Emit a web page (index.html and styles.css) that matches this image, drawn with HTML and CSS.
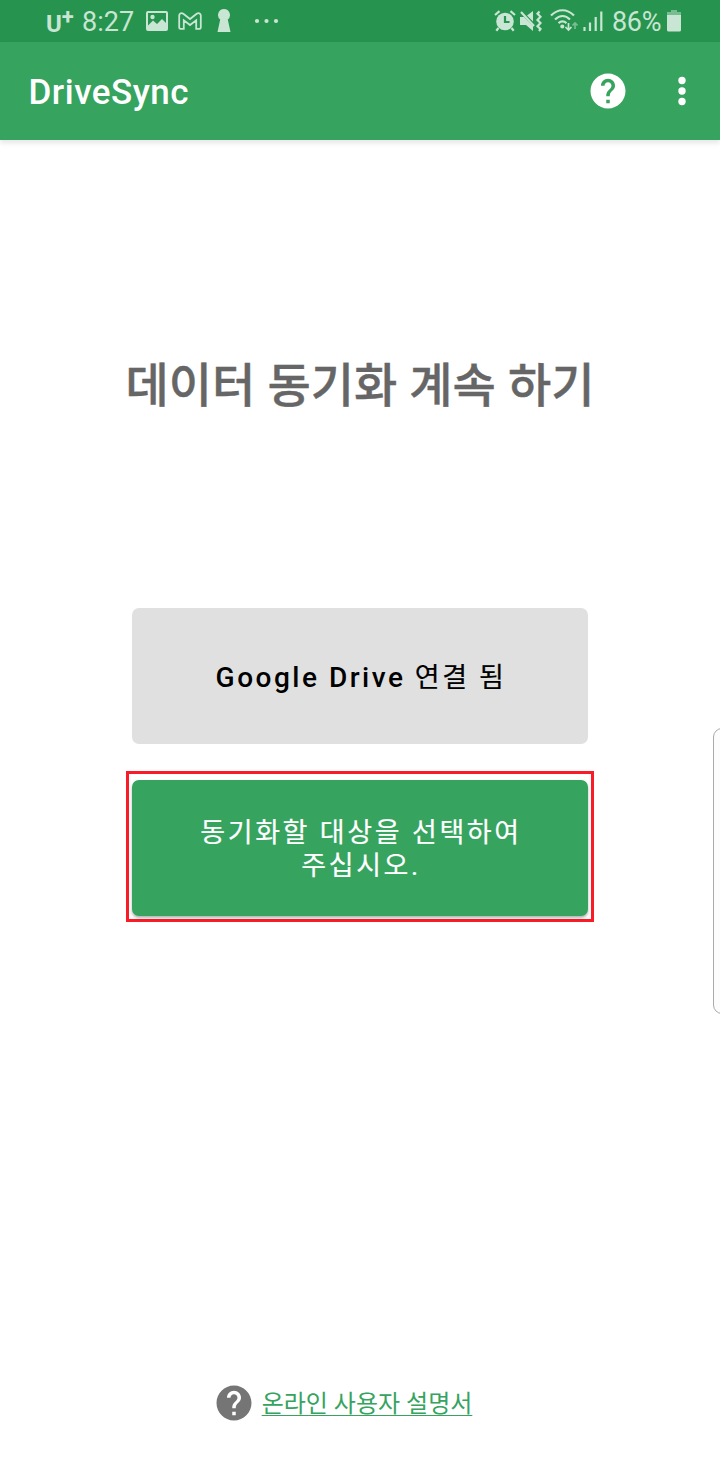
FILE: index.html
```
<!DOCTYPE html>
<html lang="ko">
  <head>
    <meta charset="UTF-8" />
    <meta name="viewport" content="width=device-width, initial-scale=1.0" />
    <title>DriveSync</title>
    <link rel="stylesheet" href="styles.css">
  </head>
  <body>
    <div class="status-bar">
      <div class="status-left">
        <span class="carrier">U<sup>+</sup></span>
        <span class="clock">8:27</span>
        <svg class="icon-picture" width="22" height="20" viewBox="0 0 22 20">
          <path fill-rule="evenodd" d="M2 0h18a2 2 0 0 1 2 2v16a2 2 0 0 1-2 2H2a2 2 0 0 1-2-2V2a2 2 0 0 1 2-2zM2 2v12.500l5-5 4 3.500 5-5 4 4V2z" />
          <circle cx="6.500" cy="6" r="2.200" />
        </svg>
        <svg class="icon-mail" width="24" height="18" viewBox="0 0 24 18">
          <path d="M1.200 15.500V3.500C1.200 1.200 3.600.5 5.300 1.800L12 7l6.700-5.200c1.700-1.300 4.100-.6 4.100 1.700v12c0 .8-.5 1.300-1.300 1.300h-3.300V8.300L12 13 5.800 8.300v8.500H2.500c-.8 0-1.300-.5-1.300-1.300z" />
        </svg>
        <svg class="icon-key" width="14" height="24" viewBox="0 0 14 24">
          <path d="M7 0a6 6 0 0 1 3.800 10.600L13.500 23H.5L3.200 10.600A6 6 0 0 1 7 0z" />
        </svg>
        <svg class="icon-more" width="26" height="6" viewBox="0 0 26 6">
          <circle cx="3" cy="3" r="2.100" /><circle cx="12.500" cy="3" r="2.100" /><circle cx="22" cy="3" r="2.100" />
        </svg>
      </div>
      <div class="status-right">
        <svg class="icon-alarm" width="22" height="22" viewBox="0 0 22 22">
          <circle cx="11" cy="11.500" r="8.800" />
          <path class="line" d="M1 5l4.500-3.800M21 5l-4.500-3.800M4.500 18L2.300 20.800M17.500 18l2.200 2.800" />
          <path class="cut" d="M11 6v6h4.500" />
        </svg>
        <svg class="icon-mute" width="22" height="22" viewBox="0 0 22 22">
          <path d="M0 7h4l9 9v5l-7-6H0zM7 5.500L13 1v10.500z" />
          <path class="line" d="M1 2l13 14M19.500 1.500l-2 2.300 3 3-3 3.200 3 3-3 3.200 3 2.800-1.500 2" />
        </svg>
        <svg class="icon-wifi" width="28" height="24" viewBox="0 0 28 24">
          <path class="line" d="M1 6.500C8-.5 17-.5 24 6.500M5 10.500c4.800-4.700 10.400-4.700 15 0M8.500 14.200c2.500-2.200 5.500-2.200 8 0" />
          <circle cx="12.300" cy="17.500" r="2" />
          <path class="arrow" d="M18.500 14v7M15.500 18l3 3 3-3" />
          <path class="arrow faded" d="M25 20v-6M22.500 16.500L25 14l2.500 2.500" />
        </svg>
        <svg class="icon-signal" width="20" height="21" viewBox="0 0 20 21">
          <path class="line" d="M1.500 16v4M7 11.500V20M12.700 6v14M18.300 0.500V20" />
        </svg>
        <span class="percent">86%</span>
        <svg class="icon-battery" width="14" height="22" viewBox="0 0 14 22">
          <path class="faded" d="M4 0h6v2h4v3H0V2h4z" />
          <path d="M0 5h14v15a1.500 1.500 0 0 1-1.500 1.500h-11A1.500 1.500 0 0 1 0 20z" />
        </svg>
      </div>
    </div>

    <div class="app-bar">
      <h1>DriveSync</h1>
      <svg class="help" width="42" height="42" viewBox="0 0 24 24">
        <path d="M12 2C6.480 2 2 6.480 2 12s4.480 10 10 10 10-4.480 10-10S17.520 2 12 2zm1 17h-2v-2h2v2zm2.070-7.750l-.9.920C13.450 12.900 13 13.500 13 15h-2v-.5c0-1.100.45-2.100 1.170-2.830l1.240-1.260c.37-.36.59-.86.59-1.410 0-1.100-.9-2-2-2s-2 .9-2 2H8c0-2.210 1.790-4 4-4s4 1.790 4 4c0 .88-.36 1.680-.93 2.250z" />
      </svg>
      <svg class="menu" width="8" height="30" viewBox="0 0 8 30">
        <circle cx="4" cy="4.500" r="3.700" /><circle cx="4" cy="15" r="3.700" /><circle cx="4" cy="25.500" r="3.700" />
      </svg>
    </div>

    <div class="content">
      <h2>데이터 동기화 계속 하기</h2>
      <button class="btn btn-connected"><span class="latin">Google Drive</span> 연결 됨</button>
      <div class="highlight">
        <button class="btn btn-select">동기화할 대상을 선택하여<br>주십시오.</button>
      </div>
      <div class="manual">
        <svg class="help" width="42" height="42" viewBox="0 0 24 24">
          <path d="M12 2C6.480 2 2 6.480 2 12s4.480 10 10 10 10-4.480 10-10S17.520 2 12 2zm1 17h-2v-2h2v2zm2.070-7.750l-.9.920C13.450 12.900 13 13.500 13 15h-2v-.5c0-1.100.45-2.100 1.170-2.830l1.240-1.260c.37-.36.59-.86.59-1.410 0-1.100-.9-2-2-2s-2 .9-2 2H8c0-2.210 1.790-4 4-4s4 1.790 4 4c0 .88-.36 1.680-.93 2.250z" />
        </svg>
        <a href="#">온라인 사용자 설명서</a>
      </div>
    </div>

    <div class="edge-panel"></div>
  </body>
</html>
```
FILE: styles.css
```
* {
  margin: 0;
  padding: 0;
  box-sizing: border-box;
  font-family: Roboto, "Noto Sans CJK KR", sans-serif;
}

body {
  position: relative;
  display: flex;
  flex-direction: column;
  width: 720px;
  height: 1480px;
  overflow: hidden;
  background: #fff;
}

svg {
  display: block;
  flex-shrink: 0;
}

/* status bar */
.status-bar {
  display: flex;
  justify-content: space-between;
  height: 42px;
  padding: 0 39px 0 46px;
  background: #26944f;
  color: #c9e5d3;
  font-size: 27px;
}

.status-bar svg {
  fill: #c9e5d3;
}

.status-bar .line,
.status-bar .arrow,
.status-bar .cut {
  fill: none;
  stroke: #c9e5d3;
  stroke-width: 2.2;
}

.status-bar .arrow {
  stroke-width: 1.7;
}

.status-bar .cut {
  stroke: #26944f;
}

.status-bar .faded {
  opacity: 0.5;
}

.status-left,
.status-right {
  display: flex;
  align-items: center;
}

.carrier {
  width: 36px;
  padding-top: 5px;
  font-size: 24px;
  font-weight: 700;
  line-height: 42px;
  white-space: nowrap;
}

.carrier sup {
  font-size: 22px;
  line-height: 0;
  vertical-align: 8px;
}

.clock {
  width: 64px;
  padding-top: 2px;
  line-height: 44px;
}

.icon-mail {
  margin-left: 10px;
}

.status-bar .icon-mail {
  fill: none;
  stroke: #c9e5d3;
  stroke-width: 1.8;
}

.icon-key {
  margin-left: 15px;
}

.icon-more {
  margin-left: 23px;
}

.icon-mute {
  margin-left: 4px;
}

.icon-wifi {
  margin-left: 8px;
}

.icon-signal {
  margin-left: 5px;
}

.percent {
  width: 55px;
  margin-left: 9px;
  padding-top: 2px;
  letter-spacing: -0.3px;
  line-height: 44px;
}

/* app bar */
.app-bar {
  display: flex;
  align-items: center;
  height: 98px;
  padding: 0 34.5px 0 28.5px;
  background: #36a35f;
  box-shadow: 0 3px 5px rgba(0, 0, 0, 0.1);
}

.app-bar h1 {
  flex: 1;
  color: #fff;
  font-size: 35px;
  font-weight: 500;
  letter-spacing: 0.5px;
  line-height: 42px;
  padding-top: 4px;
}

.app-bar svg {
  fill: #fff;
}

.app-bar .menu {
  margin-left: 48.5px;
}

/* content */
.content {
  flex: 1;
  display: flex;
  flex-direction: column;
  align-items: center;
}

.content h2 {
  margin-top: 211px;
  color: #666;
  font-size: 47px;
  font-weight: 500;
  line-height: 70px;
  white-space: nowrap;
  word-spacing: 0.5px;
  -webkit-text-stroke: 0.4px #666;
}

.btn {
  width: 456px;
  height: 136px;
  padding-top: 4px;
  padding-left: 2px;
  border: none;
  border-radius: 7px;
  font-size: 27px;
  font-weight: 400;
  letter-spacing: 2.6px;
  line-height: 33px;
  -webkit-text-stroke: 0.2px currentColor;
}

.btn-connected {
  margin-top: 187px;
  background: #e0e0e0;
  color: #000;
}

.btn .latin {
  font-size: 28px;
  font-weight: 500;
  letter-spacing: 2.5px;
  -webkit-text-stroke: 0;
}

.highlight {
  margin-top: 27px;
  padding: 6px 3px 3px;
  border: 3px solid #f91c26;
}

.btn-select {
  display: block;
  background: #36a35f;
  color: #fff;
  word-spacing: 0.5px;
  box-shadow: 0 2px 3px rgba(0, 0, 0, 0.3);
}

.manual {
  display: flex;
  align-items: center;
  margin-top: auto;
  margin-bottom: 56px;
  margin-right: 35px;
}

.manual svg {
  margin-right: 7px;
  fill: #757575;
}

.manual a {
  padding-top: 2px;
  color: #36a35f;
  font-size: 24px;
  line-height: 36px;
  text-decoration-thickness: 1px;
  text-underline-offset: 3px;
  text-decoration-skip-ink: none;
}

/* handle that overlaps the right edge of the screen */
.edge-panel {
  position: absolute;
  top: 728px;
  right: -12px;
  width: 19px;
  height: 286px;
  border: 1px solid #aaa;
  border-radius: 9px;
  background: #fcfcfc;
}
```
